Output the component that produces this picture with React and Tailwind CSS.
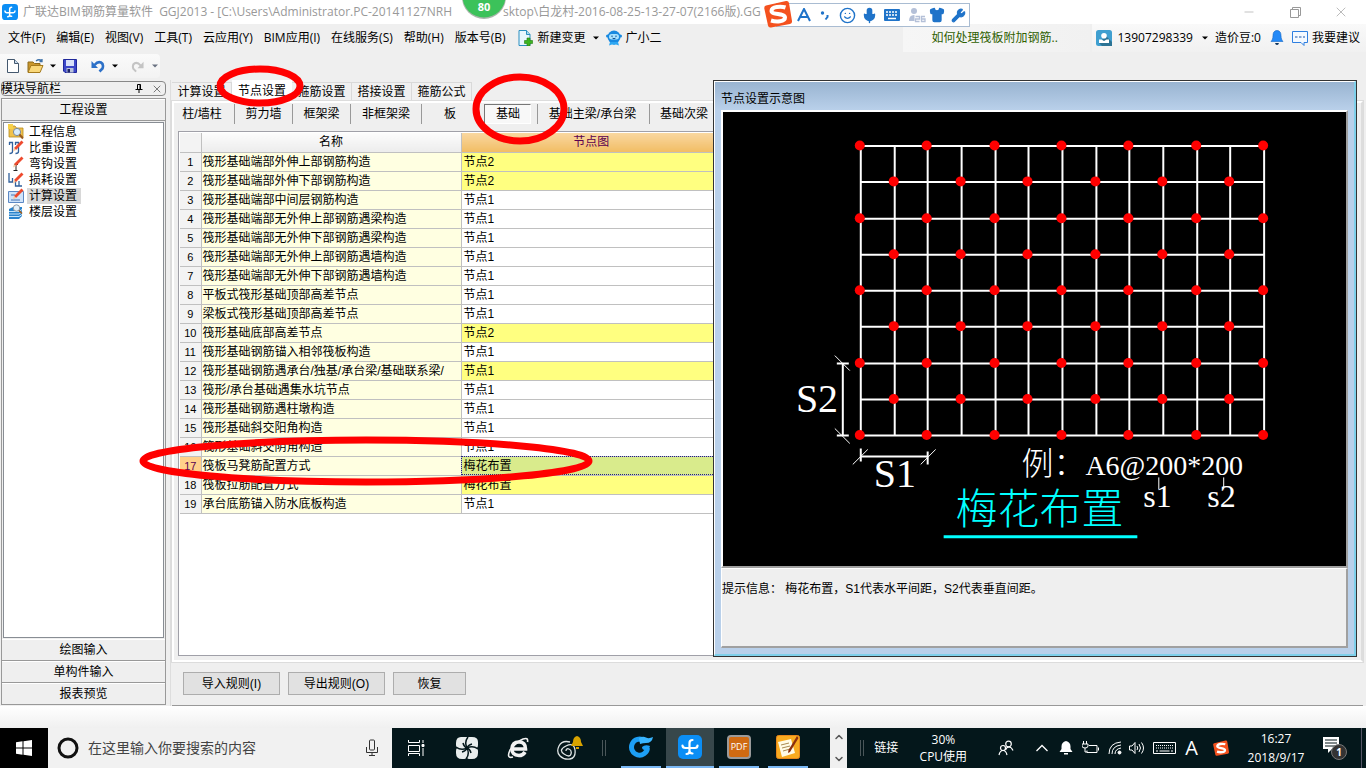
import {
  ChevronDown, ChevronUp, Minus, X, Mic, Smile, Wrench, Shirt,
} from 'lucide-react'

const MENUS = ['文件(F)', '编辑(E)', '视图(V)', '工具(T)', '云应用(Y)', 'BIM应用(I)', '在线服务(S)', '帮助(H)', '版本号(B)']

const NAV = [
  { label: '工程信息', icon: 'info' },
  { label: '比重设置', icon: 'weight' },
  { label: '弯钩设置', icon: 'hook' },
  { label: '损耗设置', icon: 'loss' },
  { label: '计算设置', icon: 'calc', active: true },
  { label: '楼层设置', icon: 'floor' },
]

const TABS = ['计算设置', '节点设置', '箍筋设置', '搭接设置', '箍筋公式']

const ROWS = [
  ['筏形基础端部外伸上部钢筋构造', '节点2', true],
  ['筏形基础端部外伸下部钢筋构造', '节点2', true],
  ['筏形基础端部中间层钢筋构造', '节点1'],
  ['筏形基础端部无外伸上部钢筋遇梁构造', '节点1'],
  ['筏形基础端部无外伸下部钢筋遇梁构造', '节点1'],
  ['筏形基础端部无外伸上部钢筋遇墙构造', '节点1'],
  ['筏形基础端部无外伸下部钢筋遇墙构造', '节点1'],
  ['平板式筏形基础顶部高差节点', '节点1'],
  ['梁板式筏形基础顶部高差节点', '节点1'],
  ['筏形基础底部高差节点', '节点2', true],
  ['筏形基础钢筋锚入相邻筏板构造', '节点1'],
  ['筏形基础钢筋遇承台/独基/承台梁/基础联系梁/', '节点1', true],
  ['筏形/承台基础遇集水坑节点', '节点1'],
  ['筏形基础钢筋遇柱墩构造', '节点1'],
  ['筏形基础斜交阳角构造', '节点1'],
  ['筏形基础斜交阴角构造', '节点1'],
  ['筏板马凳筋配置方式', '梅花布置', true],
  ['筏板拉筋配置方式', '梅花布置', true],
  ['承台底筋锚入防水底板构造', '节点1'],
]
const SELECTED = 16

const GRID_X = [138, 172, 205, 239, 273, 306, 340, 374, 407, 441, 475, 508, 542]
const GRID_Y = [34, 70, 107, 143, 179, 215, 252, 288, 324]

function Caret({ className = 'text-black' }) {
  return (
    <svg width="6" height="4" viewBox="0 0 6 4" className={className} fill="currentColor">
      <path d="M0 0.5h6L3 3.5z" />
    </svg>
  )
}

function AppLogo({ size }) {
  return (
    <svg width={size} height={size} viewBox="0 0 24 24">
      <rect width="24" height="24" rx="5" fill="#0b8ef5" />
      <path d="M14.500 5Q11.500 5 11.500 8v8q0 3-3 3M4.500 10.500q0 2.500 3 2.500h9.500q2.500 0 2.500-2.500M11.500 16q0 2.500 3 2.500" fill="none" stroke="#fff" strokeWidth="2.200" strokeLinecap="round" />
    </svg>
  )
}

function SogouLogo({ size, className = '' }) {
  return (
    <svg width={size} height={size} viewBox="0 0 28 28" className={className}>
      <path d="M2 5.500 22 1q2.500-.5 3 2l3 18q.3 2.500-2 3L7 27.500q-2.500.5-3-2L.3 8.500Q0 6 2 5.500z" fill="#f4511e" />
      <path d="M21.500 7.500C17 6 7.500 6.500 7.500 11c0 4 13.500 2 13.500 6.500 0 4.500-9 4.500-14 3" fill="none" stroke="#fff" strokeWidth="4" />
    </svg>
  )
}

function TitleBar() {
  return (
    <header className="flex h-6 items-center bg-white pl-[2px] text-xs text-[#999]">
      <AppLogo size={16} />
      <h1 className="ml-[5px] flex whitespace-nowrap">
        <span className="w-[438px] overflow-hidden">广联达BIM钢筋算量软件&nbsp; GGJ2013 - [C:\Users\Administrator.PC-20141127NRH</span>
        <span className="ml-[42px]">sktop\白龙村-2016-08-25-13-27-07(2166版).GG</span>
      </h1>
      <div className="mr-[2px] ml-auto flex">
        <button aria-label="最小化" className="flex h-5 w-[46px] items-center justify-center"><Minus size={14} strokeWidth={1} /></button>
        <button aria-label="还原" className="flex h-5 w-[46px] items-center justify-center">
          <svg width="11" height="11" viewBox="0 0 11 11" fill="none" stroke="currentColor">
            <path d="M0.500 2.500h8v8h-8zM2.500 2.500v-2h8v8h-2" />
          </svg>
        </button>
        <button aria-label="关闭" className="flex h-5 w-[46px] items-center justify-center"><X size={16} strokeWidth={1} /></button>
      </div>
    </header>
  )
}

function MenuBar() {
  return (
    <div className="flex h-7 items-center pl-2 text-xs whitespace-nowrap">
      <nav className="flex gap-[11px]">
        {MENUS.map(m => <button key={m}>{m}</button>)}
      </nav>
      <button className="ml-3 flex items-center gap-[5px]">
        <svg width="15" height="16" viewBox="0 0 15 16">
          <path d="M1 .5h7.500l3.500 4v11H1z" fill="#e9f7fe" stroke="#2b8fc0" />
          <path d="M8.500.5v4H12" fill="#a9d8ef" stroke="#2b8fc0" />
          <path d="M9 8h3v2.500h2.500v3H12V16H9v-2.500H6.500v-3H9z" fill="#3cb521" stroke="#217a12" strokeWidth=".6" />
        </svg>
        新建变更
      </button>
      <button aria-label="更多变更" className="px-[7px]"><Caret /></button>
      <button className="flex items-center gap-1">
        <svg width="16" height="16" viewBox="0 0 16 16">
          <circle cx="8" cy="7" r="6.500" fill="#1889e0" />
          <circle cx="1.500" cy="6" r="1.500" fill="#1889e0" />
          <circle cx="14.500" cy="6" r="1.500" fill="#1889e0" />
          <rect x="3" y="4" width="10" height="5.500" rx="2.700" fill="#a8e2ff" />
          <path d="M6 5.500v1.500M10 5.500v1.500M6.500 8.200q1.500 1 3 0" stroke="#0c4c8c" fill="none" />
          <path d="M4 12l-1 3.500 3-1 2 .5 2-.5 3 1-1-3.500z" fill="#2ea7f2" />
        </svg>
        广小二
      </button>

      <a href="#help" className="ml-auto flex h-full w-[187px] items-center bg-gradient-to-r from-[#f6f6f6] to-[#f1f1f1] pl-7 text-[#2f6000]">
        如何处理筏板附加钢筋..
      </a>
      <div className="ml-[2px] flex h-full items-center bg-gradient-to-b from-[#f9f9f9] to-[#f1f1f1] pr-[6px] pl-1">
        <button className="flex items-center gap-[5px]">
          <svg width="16" height="16" viewBox="0 0 16 16">
            <rect width="16" height="16" rx="2.500" fill="#3f9fd0" />
            <path d="M10 6l6 6v4H6l-3-3z" fill="#2c7394" />
            <circle cx="8" cy="5.800" r="2.800" fill="#fff" />
            <path d="M3 13V9.500h2.500L8 11l2.500-1.500H13V13z" fill="#fff" />
          </svg>
          13907298339
          <span className="pr-[5px] pl-1"><Caret /></span>
        </button>
        <span className="ml-[2px]">造价豆:0</span>
        <button aria-label="消息" className="ml-[9px]">
          <svg width="14" height="16" viewBox="0 0 14 16">
            <path d="M7 .5c3 0 4 2.500 4 5 0 3.500 1 4.500 2 6H1c1-1.500 2-2.500 2-6 0-2.500 1-5 4-5z" fill="#2389f7" stroke="#1467c4" strokeWidth=".6" />
            <path d="M5 13h4q-.5 2-2 2t-2-2z" fill="#0c3460" />
          </svg>
        </button>
        <button className="ml-2 flex items-center gap-1">
          <svg width="16" height="16" viewBox="0 0 16 16">
            <path d="M.5 1.500h15v11H12v3l-3-3H.5z" fill="#f4f9ff" stroke="#2f7fe0" />
            <path d="M3 7h2.500M7 7h2.500M11 7h2" stroke="#1b55a8" />
          </svg>
          我要建议
        </button>
      </div>
    </div>
  )
}

function Toolbar() {
  return (
    <div className="flex h-7 items-center">
      <div className="flex h-6 w-40 items-center rounded-r bg-gradient-to-b from-[#fafafa] to-[#f3f3f3] pl-[7px]">
        <button aria-label="新建">
          <svg width="12" height="14" viewBox="0 0 12 14">
            <path d="M.5.5h7l4 4v9H.5z" fill="#fff" stroke="#44586e" />
            <path d="M7.500.5v4h4" fill="#c9dcf0" stroke="#44586e" />
          </svg>
        </button>
        <button aria-label="打开" className="ml-2">
          <svg width="18" height="16" viewBox="0 0 18 16">
            <path d="M1 14V4h5l1.500 1.500H13V8" fill="#c9962c" stroke="#8c6a1d" />
            <path d="M1 14.500 4 7.500h12l-3 7z" fill="#f9d779" stroke="#a57a1c" />
            <path d="M9 3q3-2.500 6 0m0-2v2.500h-2.500" fill="none" stroke="#3d71a8" strokeWidth="1.300" />
          </svg>
        </button>
        <button aria-label="最近文件" className="px-[5px]"><Caret /></button>
        <button aria-label="保存" className="ml-[2px]">
          <svg width="14" height="14" viewBox="0 0 14 14">
            <path d="M.5.5h13v13H2L.5 12z" fill="#3c47c8" stroke="#20289a" />
            <path d="M3 1h8v6H3z" fill="#d9e1f9" />
            <path d="M3.500 9h7v4.500h-7z" fill="#b9c2d9" />
            <path d="M4.500 10h2.500v3.500H4.500z" fill="#1c2266" />
          </svg>
        </button>
        <span className="ml-[7px] h-5 w-px bg-[#999]" />
        <button aria-label="撤销" className="ml-[7px]">
          <svg width="14" height="14" viewBox="0 0 14 14">
            <path d="M3.500 6Q7 2 10 3.500t1.500 6L8.500 12.500" fill="none" stroke="#2d71c8" strokeWidth="2.600" />
            <path d="M.5 2v7H7z" fill="#2d71c8" />
          </svg>
        </button>
        <button aria-label="撤销列表" className="px-[7px]"><Caret /></button>
        <button aria-label="恢复操作" className="ml-[6px]">
          <svg width="13" height="13" viewBox="0 0 14 14">
            <path d="M10.500 6Q7 2 4 3.500t-1.500 6L5.500 12.500" fill="none" stroke="#c4c4c4" strokeWidth="2.200" />
            <path d="M13.500 2v7H7z" fill="#c4c4c4" />
          </svg>
        </button>
        <button aria-label="恢复列表" className="px-2"><Caret className="text-gray-500" /></button>
      </div>
    </div>
  )
}

function Pencil() {
  return (
    <g>
      <path d="M13.500.5l2 2-7.500 7.500-2-2z" fill="#ee4a2e" />
      <path d="M6 8l2 2-3 1.500z" fill="#f5c9a0" />
    </g>
  )
}

function NavIcon({ name }) {
  return (
    <svg width="16" height="16" viewBox="0 0 16 16" className="shrink-0">
      {name === 'info' && (
        <>
          <path d="M1 2h6l1.500 2H15v9H1z" fill="#f0c24c" stroke="#b58a20" strokeWidth=".8" />
          <path d="M0 0h5v5H0z" fill="#f6d14a" />
          <circle cx="9" cy="8" r="3.600" fill="#d7ecfb" stroke="#7c8a99" />
          <path d="M11.500 10.500l3.500 4" stroke="#9a5b1d" strokeWidth="2" />
        </>
      )}
      {name === 'weight' && (
        <>
          <path d="M1 2.500h3.500v9q0 2-3 2M7 2.500h3.500v9q0 2-3 2M1.500 2v3M7.500 2v3" fill="none" stroke="#31609c" strokeWidth="1.300" />
          <Pencil />
        </>
      )}
      {name === 'hook' && (
        <>
          <path d="M6 8.500h4M8 8.500v6M5.500 14.500h4" stroke="#222" fill="none" />
          <Pencil />
        </>
      )}
      {name === 'loss' && (
        <>
          <path d="M1 1v9h3.500V6M7.500 9v5h3.500V9M11 14h3" fill="none" stroke="#31609c" strokeWidth="1.300" />
          <Pencil />
        </>
      )}
      {name === 'calc' && (
        <>
          <path d="M.5 3.500h15v11H.5z" fill="#cfe3fa" stroke="#5c88c4" />
          <path d="M3 7h4M3 12h9" stroke="#4674b4" />
          <Pencil />
        </>
      )}
      {name === 'floor' && (
        <>
          <path d="M1 5l4-2h9v9l-3 3H1z" fill="#2b83cc" />
          <path d="M1 7.500h10l3-2M1 10h10l3-2M1 12.500h10l3-2" stroke="#c8e6fb" fill="none" />
          <circle cx="8.500" cy="4" r="3.200" fill="#e3f0fa" stroke="#8f9aa5" />
          <path d="M11 6.500l3 3" stroke="#9a5b1d" strokeWidth="1.600" />
        </>
      )}
    </svg>
  )
}

function Sidebar() {
  const section = 'h-[22px] w-full border-t border-b border-t-white border-b-[#999]'
  return (
    <aside className="flex w-[166px] shrink-0 flex-col pt-px pb-px pl-px text-xs">
      <div className="flex h-[15px] items-center rounded-sm border border-[#888]">
        <h2 className="-ml-px">模块导航栏</h2>
        <button aria-label="固定" className="ml-auto">
          <svg width="8" height="9" viewBox="0 0 8 9" fill="none" stroke="#000"><path d="M2.500 5V.5h3V5M5 .5V5M.5 5.500h7M4 5.500V9" /></svg>
        </button>
        <button aria-label="关闭导航栏" className="mr-[2px] ml-2"><X size={12} strokeWidth={1} /></button>
      </div>
      <div className="mt-[2px] flex flex-1 flex-col border border-[#999]">
        <button className={section}>工程设置</button>
        <ul className="m-px flex-1 border border-[#888d94] bg-white pt-px pl-[2px]">
          {NAV.map(item => (
            <li key={item.label} className="h-4">
              <button className="flex h-4 items-center gap-[3px] pl-[2px]">
                <NavIcon name={item.icon} />
                <span className={item.active ? 'bg-[#d8d8d8] pr-1 pl-[2px] leading-4' : 'pl-[2px] leading-4'}>{item.label}</span>
              </button>
            </li>
          ))}
        </ul>
        <button className={section}>绘图输入</button>
        <button className={section}>单构件输入</button>
        <button className="h-[21px] w-full border-t border-t-white">报表预览</button>
      </div>
    </aside>
  )
}

function NodeTable() {
  return (
    <div className="mx-1 mt-[3px] mb-1 flex-1 overflow-hidden border border-[#a0a0a8] bg-white pt-px pl-px">
      <table className="w-[541px] table-fixed border-collapse text-xs leading-[18px]">
        <thead>
          <tr className="h-[19px]">
            <th className="w-[21px] border-r border-b border-[#c0c0c0] bg-[#f3f3f3] p-0" />
            <th className="w-[260px] border-r border-b border-[#c0c0c0] bg-gradient-to-b from-[#fcfcfc] to-[#ececec] p-0 font-normal">名称</th>
            <th className="w-[260px] border-b border-[#c0c0c0] bg-gradient-to-b from-[#f9d79f] to-[#f1bd63] p-0 font-normal text-[#5a0050]">节点图</th>
          </tr>
        </thead>
        <tbody>
          {ROWS.map(([name, node, changed], i) => (
            <tr key={name} className="h-[19px]">
              <th scope="row" className={`border-r border-b border-[#c0c0c0] p-0 text-center text-[11px] font-normal ${i === SELECTED ? 'bg-[#ffd08a] text-[#5a0050]' : 'bg-[#f3f3f3]'}`}>
                {i + 1}
              </th>
              <td className="overflow-hidden border-r border-b border-[#c0c0c0] bg-[#ffffe1] p-0 pl-px whitespace-nowrap">{name}</td>
              <td className={`border-b border-[#c0c0c0] p-0 pl-[2px] ${i === SELECTED ? 'bg-[#d9eb8c] outline-1 -outline-offset-1 outline-dotted outline-[#202080]' : changed ? 'bg-[#ffff80]' : 'bg-white'}`}>
                {node}
              </td>
            </tr>
          ))}
        </tbody>
      </table>
    </div>
  )
}

function SubTabs() {
  const tab = 'h-5 border-r border-[#999] text-center'
  return (
    <div className="flex h-[25px] items-start pt-px text-xs whitespace-nowrap" role="tablist">
      <button role="tab" className={`${tab} w-[61px] pr-1`}>柱/墙柱</button>
      <button role="tab" className={`${tab} w-[58px]`}>剪力墙</button>
      <button role="tab" className={`${tab} w-[58px]`}>框架梁</button>
      <button role="tab" className={`${tab} w-[71px]`}>非框架梁</button>
      <button role="tab" className="h-5 w-[60px] pr-1 text-center">板</button>
      <div className="flex h-5 w-14 border-r border-[#999] pl-[2px]">
        <button role="tab" aria-selected="true" className="h-5 w-[47px] border border-t-[#777] border-r-white border-b-white border-l-[#777] bg-[#f8f8f8] pl-px text-center">基础</button>
      </div>
      <button role="tab" className={`${tab} w-[112px] pr-[2px]`}>基础主梁/承台梁</button>
      <button role="tab" className={`${tab} w-[71px] pr-[2px]`}>基础次梁</button>
    </div>
  )
}

function Diagram() {
  const right = GRID_X[GRID_X.length - 1]
  const bottom = GRID_Y[GRID_Y.length - 1]
  return (
    <svg viewBox="0 0 624 455" className="block w-full bg-black" role="img" aria-label="梅花布置">
      <g stroke="#fff" strokeWidth="2">
        {GRID_X.map(x => <line key={x} x1={x} y1={GRID_Y[0]} x2={x} y2={bottom} />)}
        {GRID_Y.map(y => <line key={y} x1={GRID_X[0]} y1={y} x2={right} y2={y} />)}
        <path d="M120 252v72M114 252h12M114 324h12M138 345h67M138 337v13M205 340v13" />
      </g>
      <path d="M112 244l15 15M112 317l15 15M130 353l15-15M198 353l15-15M436.500 366v12M501.500 366v12" stroke="#fff" />
      <g fill="red">
        {GRID_Y.map((y, row) =>
          GRID_X.filter((_, col) => col % 2 === row % 2).map(x => (
            <ellipse key={`${x}-${y}`} cx={x - 1} cy={y - 0.5} rx="5" ry="5" />
          ))
        )}
      </g>
      <g fill="#fff" className="font-['Liberation_Serif','Noto_Sans_CJK_SC',serif] font-light">
        <text x="73" y="301" fontSize="40">S2</text>
        <text x="151" y="376" fontSize="40">S1</text>
        <text x="299" y="364" fontSize="32">例：</text>
        <text x="363" y="364" fontSize="28">A6@200*200</text>
        <text x="421" y="396" fontSize="32">s1</text>
        <text x="485" y="396" fontSize="32">s2</text>
        <text x="233" y="413" fontSize="42" fill="cyan">梅花布置</text>
      </g>
      <path d="M221 425.500h194" stroke="cyan" strokeWidth="3" />
    </svg>
  )
}

function DiagramWindow() {
  return (
    <section className="absolute top-0 right-[9px] bottom-[49px] left-[542px] flex flex-col border border-[#333] bg-[#b9d0ea] text-xs">
      <div className="flex flex-1 flex-col border-t border-r-2 border-b-2 border-l border-t-white border-r-[#7fd0ea] border-b-[#7fd0ea] border-l-white px-[6px] pb-[6px]">
        <h2 className="-mx-[6px] h-7 bg-gradient-to-b from-[#99b4d1] to-[#b9d0ea] px-[6px] pt-[7px] leading-5">节点设置示意图</h2>
        <div className="border-2 border-t-white border-r-[#a0a0a0] border-b-[#a0a0a0] border-l-white">
          <Diagram />
        </div>
        <p className="flex-1 border-t border-r-2 border-b-2 border-l border-t-white border-r-[#a0a0a0] border-b-[#a0a0a0] border-l-white bg-[#efefef] pt-3 leading-4">
          提示信息： 梅花布置，S1代表水平间距，S2代表垂直间距。
        </p>
      </div>
    </section>
  )
}

function Workspace() {
  const action = 'h-[23px] border border-[#adadad] bg-[#e1e1e1] text-xs'
  return (
    <main className="relative flex min-w-0 flex-1 flex-col border-l border-[#ddd] pr-[3px] pl-px">
      <div className="flex items-end text-xs" role="tablist">
        {TABS.map((t, i) => (
          <button
            key={t}
            role="tab"
            aria-selected={i === 1}
            className={i === 1 ? 'h-[21px] w-[60px] bg-white' : 'h-[19px] w-[60px] border-t border-r border-[#d9d9d9] bg-[#f0f0f0]'}
          >
            {t}
          </button>
        ))}
      </div>
      <div className="flex flex-1 flex-col border-2 border-white border-r-[#ddd] outline-1 outline-[#dcdcdc]">
        <SubTabs />
        <NodeTable />
      </div>
      <div className="mt-[2px] flex h-[42px] items-start gap-2 border-b border-[#999] pt-2 pl-[11px]">
        <button className={`${action} w-[97px]`}>导入规则(I)</button>
        <button className={`${action} w-[97px]`}>导出规则(O)</button>
        <button className={`${action} w-[73px]`}>恢复</button>
      </div>
      <DiagramWindow />
    </main>
  )
}

function ImeBar() {
  return (
    <div className="absolute top-[3px] left-[776px] flex h-[24px] w-[194px] items-center border border-[#a9bcd2] bg-white pl-5 text-[#1f73c9]">
      <SogouLogo size={28} className="absolute -top-[4px] -left-[13px]" />
      <svg width="14" height="14" viewBox="0 0 14 14"><path d="M1 13 7 1l6 12M3.500 9h7" fill="none" stroke="currentColor" strokeWidth="2" /></svg>
      <svg width="10" height="12" viewBox="0 0 10 12" className="ml-[9px]"><circle cx="2.500" cy="4" r="1.700" fill="currentColor" /><path d="M7.500 6v2l-2 2.500" fill="none" stroke="currentColor" strokeWidth="2" /></svg>
      <Smile size={17} className="ml-[9px]" />
      <Mic size={17} fill="currentColor" className="ml-[5px]" />
      <svg width="16" height="12" viewBox="0 0 16 12" className="ml-[6px]">
        <rect width="16" height="12" rx="1" fill="currentColor" />
        <path d="M2 3h12M2 6h12" stroke="#fff" strokeWidth="1.500" strokeDasharray="2 1" />
        <path d="M4 9.500h8" stroke="#fff" strokeWidth="1.500" />
      </svg>
      <svg width="18" height="16" viewBox="0 0 18 16" className="ml-2 text-[#b4c0d8]">
        <circle cx="6" cy="4" r="3" fill="currentColor" />
        <path d="M1 14q0-6 5-6t5 3v3z" fill="currentColor" />
        <path d="M6.500 8H18v8H6.500z" fill="#fff" />
        <path d="M7.500 9.500h4V12h-4v2.500h4M17 9.500h-3.500v5H17V12h-3" fill="none" stroke="currentColor" strokeWidth="1.300" />
      </svg>
      <Shirt size={16} fill="currentColor" className="ml-[3px]" />
      <Wrench size={15} fill="currentColor" className="ml-[6px]" />
    </div>
  )
}

function SpeedBadge() {
  return (
    <div className="absolute top-0 left-[462px] flex h-5 w-11 justify-center overflow-hidden text-[11px] leading-[14px] font-bold text-white">
      <svg width="44" height="20" viewBox="0 0 44 20" className="absolute inset-0">
        <circle cx="22" cy="-3" r="22" fill="#a9b5ab" />
        <circle cx="22" cy="-4" r="21.500" fill="#3cc25a" />
      </svg>
      <span className="relative">80</span>
    </div>
  )
}

// hand-drawn red rings over the tab, the sub tab and row 17
function Marks() {
  return (
    <svg className="pointer-events-none absolute inset-0 h-full w-full" fill="none" stroke="red" strokeWidth="7">
      <ellipse cx="260" cy="86" rx="40" ry="17" />
      <ellipse cx="520" cy="109" rx="44" ry="32" />
      <ellipse cx="366" cy="461" rx="223" ry="21" />
    </svg>
  )
}

function Taskbar() {
  const slot = 'flex h-10 w-[49px] items-center justify-center'
  return (
    <footer className="flex h-10 items-center bg-[#04171b] text-xs text-white">
      <button aria-label="开始" className="flex h-10 w-12 items-center justify-center bg-black">
        <svg width="16" height="16" viewBox="0 0 16 16" fill="#fff"><path d="M0 2.200 6.500 1.300v6.200H0zM7.500 1.200 16 0v7.500H7.500zM0 8.500h6.500v6.200L0 13.800zM7.500 8.500H16V16l-8.500-1.200z" /></svg>
      </button>
      <label className="flex h-10 w-[344px] items-center bg-[#f1f1f1] pr-[13px] pl-[9px] text-black">
        <svg width="22" height="22" viewBox="0 0 22 22"><circle cx="11" cy="11" r="9" fill="none" stroke="#111" strokeWidth="3" /></svg>
        <input aria-label="搜索" placeholder="在这里输入你要搜索的内容" className="ml-[9px] min-w-0 flex-1 bg-transparent text-sm placeholder:text-[#444] outline-none" />
        <svg width="14" height="18" viewBox="0 0 14 18" fill="none" stroke="#333"><rect x="4.500" y="1" width="5" height="10" rx="1" /><path d="M1.500 8v5.500h11V8M7 13.500v3M4 16.500h6" /></svg>
      </label>
      <button aria-label="任务视图" className={slot}>
        <svg width="17" height="16" viewBox="0 0 17 16" fill="none" stroke="#fff"><path d="M.5 0v2.500h11V0M.5 5.500h11v6H.5zM.5 16v-2.500h11V16M15 0v3M15 8v8" /><path d="M14 4.500h2v2h-2z" fill="#fff" /></svg>
      </button>
      <button aria-label="浏览器" className={`${slot} w-[52px]`}>
        <svg width="22" height="22" viewBox="0 0 22 22">
          <path d="M5 0h6q1 0 0 0h5q6 0 6 5v3q0 2-1 3 1 1 1 3v2q0 6-6 6h-3q-1 0-2-1-1 1-3 1H6q-6 0-6-6v-2q0-2 1-3-1-1-1-3V6q0-6 5-6z" fill="#e9eded" />
          <g fill="none" stroke="#04171b" strokeWidth="1.500">
            <path d="M12 0Q8 5 11 11M22 12Q17 8 11 11M10 22q4-5 1-11M0 10q5 4 11 1" />
            <path d="M11 11Q12 8 16 7M11 11q3 1 4 5M11 11q-1 3-5 4M11 11Q8 10 7 6" />
          </g>
        </svg>
      </button>
      <button aria-label="Internet Explorer" className={slot}>
        <svg width="22" height="22" viewBox="0 0 22 22" fill="none" stroke="#f2f2f2">
          <path d="M5 12h13.500Q18.500 5 12 5t-7 6.500T12 18.500q4 0 6-3.500" strokeWidth="3.600" />
          <path d="M20.500 5Q21.500 0 16 2T3 13q-4 9 3 7" strokeWidth="1.600" />
        </svg>
      </button>
      <button aria-label="通知" className={`${slot} w-[56px]`}>
        <svg width="28" height="26" viewBox="0 0 28 26" fill="none">
          <path d="M14 7Q6 5 3 11t1 10 10 3 5-9-9-4-2 8 7 0-2-5-3 2" stroke="#dfe5e5" strokeWidth="1.300" />
          <path d="M21 1q4 1 4 6l2 4H15l2-4q0-5 4-6zM20 12h3v2h-3z" fill="#d9a400" />
        </svg>
      </button>
      <span className="mx-1 h-4 w-1 border-x border-[#4a5659]" />
      <button aria-label="广联达服务" className="ml-[11px] flex h-10 w-10 items-center justify-center border-b-2 border-[#7ab8f5]">
        <svg width="24" height="24" viewBox="0 0 24 24" fill="none">
          <path d="M15 5.500A8 8 0 1 0 18.500 13" stroke="#1d9ff5" strokeWidth="5" />
          <path d="M10 3q4-2 7-.5T24 2q-1 6-7 6-3 0-6 1z" fill="#39b5ff" />
          <path d="M21 11q-5-2-8 1 0 3 3 3l3 2z" fill="#1d9ff5" />
        </svg>
      </button>
      <button aria-label="GGJ2013" className="ml-[5px] flex h-10 w-12 items-center justify-center border-b-2 border-[#7ab8f5] bg-[#37474b]"><AppLogo size={24} /></button>
      <button aria-label="PDF" className="ml-[5px] flex h-10 w-10 items-center justify-center border-b-2 border-[#7ab8f5]">
        <span className="flex h-6 w-6 items-center justify-center rounded-sm border-2 border-[#9a9a9a] bg-[#cf6a12] text-[9px]">PDF</span>
      </button>
      <button aria-label="便笺" className="ml-[9px] flex h-10 w-10 items-center justify-center border-b-2 border-[#7ab8f5]">
        <svg width="24" height="24" viewBox="0 0 24 24">
          <rect x=".5" y=".5" width="23" height="23" rx="2" fill="#f8ab20" stroke="#e8861a" />
          <path d="M2 7l13-3 4 14-13 4z" fill="#fffbe6" />
          <path d="M5 10l8-2M6 13l8-2M7 16l7-2" stroke="#a98a50" />
          <path d="M21 1l1.500 2L14 17l-2 1 .5-3z" fill="#8c2f0d" />
        </svg>
      </button>
      <div className="ml-[22px] flex h-10 w-[17px] flex-col items-center justify-between bg-[#f0f0f0] py-[3px] text-[#555]">
        <ChevronUp size={12} strokeWidth={3} />
        <ChevronDown size={12} strokeWidth={3} />
      </div>

      <div className="ml-auto flex h-10 items-center">
        <span className="h-4 w-1 border-x border-[#4a5659]" />
        <button className="ml-[10px]">链接</button>
        <div className="ml-4 w-[58px] text-center leading-[17px] whitespace-nowrap">30%<br />CPU使用</div>
        <button aria-label="人脉" className="ml-[26px]">
          <svg width="16" height="16" viewBox="0 0 16 16" fill="none" stroke="#fff" strokeWidth="1.200"><circle cx="10.500" cy="4" r="2.800" /><path d="M7.500 10q1-3 3.500-3t4 3.500" /><circle cx="5" cy="8" r="2.500" /><path d="M1 15q1-4.500 4-4.500T9 15" /></svg>
        </button>
        <button aria-label="显示隐藏的图标" className="ml-5">
          <svg width="16" height="16" viewBox="0 0 16 16" fill="none" stroke="#fff" strokeWidth="1.300"><path d="M2.500 11 8 5.500l5.500 5.500" /></svg>
        </button>
        <svg width="14" height="14" viewBox="0 0 14 14" fill="#fff" className="ml-[9px]"><path d="M7 0q4.500 1 4.500 5.500V8L13.500 11H.5l2-3V5.500Q2.500 1 7 0zM5 12h4v1.500H5z" /></svg>
        <svg width="17" height="14" viewBox="0 0 17 14" fill="none" stroke="#fff" className="ml-[9px]"><path d="M7 4.500h8v7H5v-2M16.500 6.500v3M1.500 0v3M4.500 0v3M0 3h6v2q0 2-3 2t-3-2zM3 7v4h2" /></svg>
        <svg width="14" height="14" viewBox="0 0 14 14" fill="none" stroke="#fff" className="ml-[9px]"><path d="M1 13Q1 2 13 1M4 13Q4 5 13 4M7 13q0-5 6-6" /><circle cx="11.500" cy="11.500" r="1.500" fill="#fff" /></svg>
        <svg width="16" height="14" viewBox="0 0 16 14" fill="none" stroke="#fff" className="ml-[7px]"><path d="M.5 5h2.500l3-3.500v11L3 9H.5zM8 5q1.500 2 0 4M10 3q3 4 0 8M12.500 1.500q4 5.500 0 11" /></svg>
        <svg width="23" height="14" viewBox="0 0 23 14" fill="none" stroke="#fff" className="ml-2"><path d="M.5 1.500h22v11H.5z" /><path d="M3 4.500h17M3 7h17" strokeDasharray="1 1" /><path d="M3 10h2M6.500 10h10M18 10h2" /></svg>
        <span className="ml-[9px] text-xl leading-5">A</span>
        <SogouLogo size={16} className="ml-[15px]" />
        <time className="ml-4 w-[62px] text-center leading-[19px]">16:27<br />2018/9/17</time>
        <button aria-label="操作中心" className="relative ml-4 h-6 w-6">
          <svg width="24" height="24" viewBox="0 0 24 24">
            <path d="M0 1h16v12H9l-4 4v-4H0z" fill="#fff" />
            <path d="M2 4h12M2 7h12M2 10h10" stroke="#04171b" />
          </svg>
          <span className="absolute top-2 left-2 h-4 w-4 rounded-full border border-[#777] bg-[#333] text-[10px] leading-[14px] font-bold">1</span>
        </button>
        <span className="mr-1 ml-[14px] h-10 w-px bg-[#556]" />
      </div>
    </footer>
  )
}

export default function App() {
  return (
    <div className="relative flex min-h-screen flex-col overflow-hidden bg-[#efefef] font-['Open_Sans','Noto_Sans_CJK_SC',sans-serif] text-black">
      <TitleBar />
      <MenuBar />
      <Toolbar />
      <div className="flex flex-1 font-['Liberation_Sans','Noto_Sans_CJK_SC',sans-serif]">
        <Sidebar />
        <div className="w-1 shrink-0" />
        <Workspace />
      </div>
      <div className="h-[22px] bg-gradient-to-b from-white to-[#f0f0f0]" />
      <Taskbar />
      <SpeedBadge />
      <ImeBar />
      <Marks />
    </div>
  )
}
